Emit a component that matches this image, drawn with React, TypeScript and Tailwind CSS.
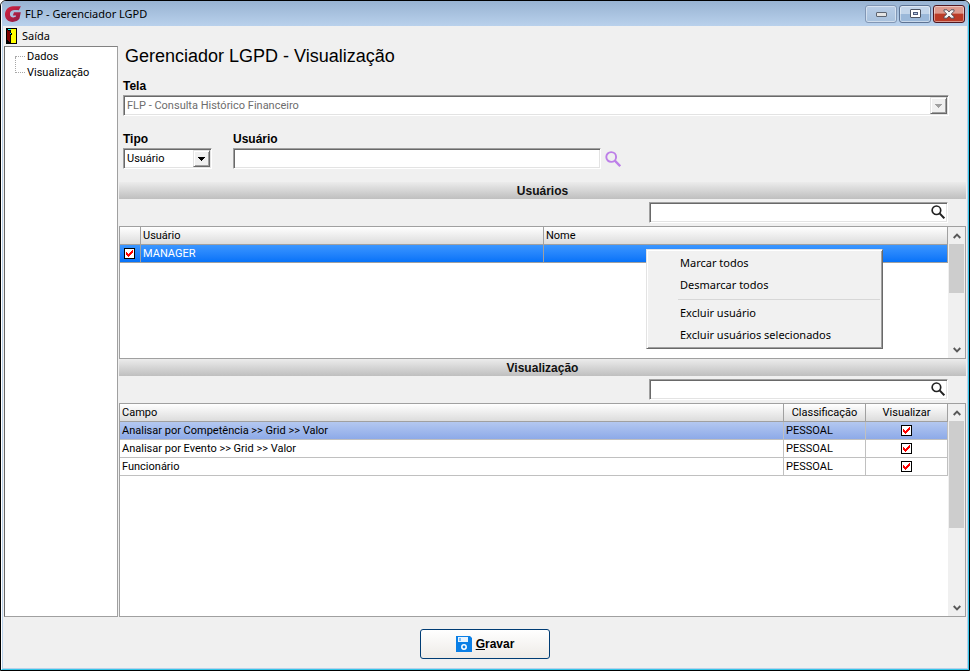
import { useState } from "react";
import type { ReactNode } from "react";
import clsx from "clsx";

const CAMPOS = [
  { campo: "Analisar por Competência >> Grid >> Valor", classificacao: "PESSOAL" },
  { campo: "Analisar por Evento >> Grid >> Valor", classificacao: "PESSOAL" },
  { campo: "Funcionário", classificacao: "PESSOAL" },
];

const SUNKEN =
  "border border-t-[#a0a0a0] border-l-[#a0a0a0] border-r-white border-b-white bg-white shadow-[inset_1px_1px_0_#696969,inset_-1px_-1px_0_#e3e3e3]";

const LABEL = "block pb-px font-['Liberation_Sans',sans-serif] text-[12px] leading-4 font-bold";

function Logo() {
  return (
    <svg viewBox="0 0 16 16" className="size-4 shrink-0" aria-hidden="true">
      <defs>
        <linearGradient id="logo" x1="0" y1="0" x2="1" y2="1">
          <stop offset="0" stopColor="#d8243f" />
          <stop offset="1" stopColor="#8c1c45" />
        </linearGradient>
      </defs>
      <path
        fill="url(#logo)"
        d="M15.900.3 13.800 4.200C12.400 4 10.500 3.900 9 4 6.300 4.200 5 5.700 4.900 7.900c0 2.200 1.300 3.500 3.500 3.500 1.100 0 1.800-.2 2.400-.8l.3-1.100H7.800L9 6.300h6.800l-1.300 6.300c-1.500 2.200-3.800 3.300-7 3.300C3 15.900 0 13 0 8.600 0 3.900 3.200.6 8 .2c2.300-.2 5.300.1 7.900.1z"
      />
    </svg>
  );
}

function DoorIcon() {
  return (
    <svg viewBox="0 0 11 16" className="h-4 w-[11px]" shapeRendering="crispEdges" aria-hidden="true">
      <path d="M0 0h11v16H0z" fill="#000" />
      <path d="M5 1h5v14H5z" fill="#ff0" />
      <path d="M1 2h1v1h2v11H3v-1H2v-1H1z" fill="#800000" />
      <path d="M4 3h1v2h1v2H5v8H4z" fill="#000" />
      <path d="M2 1h3v1H2zM4 5h1v1H4z" fill="#0ff" />
    </svg>
  );
}

function SearchIcon({ className }: { className?: string }) {
  return (
    <svg viewBox="0 0 16 16" className={className} fill="none" stroke="currentColor" aria-hidden="true">
      <circle cx="6.200" cy="6" r="4.900" strokeWidth="1.900" />
      <path d="m9.800 9.600 5.400 5.600" strokeWidth="2.300" />
    </svg>
  );
}

function Chevron({ down }: { down?: boolean }) {
  return (
    <svg viewBox="0 0 8 6" className={clsx("h-1.5 w-2", down && "rotate-180")} aria-hidden="true">
      <path d="M.7 5 4 1.700 7.300 5" fill="none" stroke="#585858" strokeWidth="1.900" />
    </svg>
  );
}

function ScrollBar({ thumb }: { thumb: string }) {
  return (
    <div className="flex w-[17px] shrink-0 flex-col items-center bg-[#f0f0f0]">
      <button aria-label="Rolar para cima" className="flex h-[17px] w-full shrink-0 items-center justify-center">
        <Chevron />
      </button>
      <div className="w-full flex-1 px-px">
        <div className={clsx("bg-[#cdcdcd]", thumb)} />
      </div>
      <button aria-label="Rolar para baixo" className="flex h-[17px] w-full shrink-0 items-center justify-center">
        <Chevron down />
      </button>
    </div>
  );
}

function Check({ label }: { label: string }) {
  const [on, setOn] = useState(true);
  return (
    <span className="mx-auto grid size-[11px]">
      <input
        type="checkbox"
        aria-label={label}
        checked={on}
        onChange={(e) => setOn(e.target.checked)}
        className="col-start-1 row-start-1 size-[11px] appearance-none border border-black bg-white"
      />
      {on && (
        <svg viewBox="0 0 11 11" className="pointer-events-none col-start-1 row-start-1 size-[11px]" shapeRendering="crispEdges">
          <path d="M2 4v3h1v1h1v1h1V8h1V7h1V6h1V5h1V2H8v1H7v1H6v1H5v1H4V5H3V4z" fill="#f00" />
        </svg>
      )}
    </span>
  );
}

function Combo({ id, value, disabled, className }: { id: string; value: string; disabled?: boolean; className?: string }) {
  return (
    <div className={clsx("grid h-[21px] items-center", SUNKEN, className)}>
      <select
        id={id}
        disabled={disabled}
        className={clsx(
          "col-start-1 row-start-1 w-full appearance-none bg-transparent pt-px pl-[3px] text-[11px] leading-4 opacity-100",
          disabled ? "text-[#6d6d6d]" : "text-black",
        )}
      >
        <option>{value}</option>
      </select>
      <span className="pointer-events-none col-start-1 row-start-1 mr-px flex h-[17px] w-[17px] items-center justify-center justify-self-end border border-t-[#e3e3e3] border-l-[#e3e3e3] border-r-[#696969] border-b-[#696969] bg-[#f0f0f0] shadow-[inset_1px_1px_0_#fff,inset_-1px_-1px_0_#a0a0a0]">
        <svg viewBox="0 0 7 4" className={clsx("h-1 w-[7px]", disabled ? "fill-[#a0a0a0]" : "fill-black")} shapeRendering="crispEdges">
          <path d="M0 0h7v1H6v1H5v1H4v1H3V3H2V2H1V1H0z" />
        </svg>
      </span>
    </div>
  );
}

function Band({ children }: { children: ReactNode }) {
  return (
    <h2 className="h-[17px] bg-linear-to-b from-[#ececec] to-[#bfbfbf] pt-px text-center font-['Liberation_Sans',sans-serif] text-[12px] leading-4 font-bold text-[#111]">
      {children}
    </h2>
  );
}

function SearchBox({ label }: { label: string }) {
  return (
    <div className="flex h-[27px] items-start justify-end pt-[3px] pr-[18px]">
      <div className={clsx("flex h-[21px] w-[299px] items-center pr-0.5 pb-px", SUNKEN)}>
        <input type="search" aria-label={label} className="min-w-0 flex-1 bg-transparent px-1 outline-none" />
        <SearchIcon className="size-3.5 text-[#222]" />
      </div>
    </div>
  );
}

function Th({ children, center }: { children?: ReactNode; center?: boolean }) {
  return (
    <th
      className={clsx(
        "h-[18px] border-r border-b border-[#a0a0a0] bg-linear-to-b from-white to-[#dcdcdc] px-0.5 pt-px pb-0 font-normal",
        center ? "text-center" : "text-left",
      )}
    >
      {children}
    </th>
  );
}

function MenuItem({ children }: { children: ReactNode }) {
  return (
    <button role="menuitem" className="block h-[22px] w-full pl-8 text-left leading-[22px]">
      {children}
    </button>
  );
}

function ContextMenu() {
  return (
    <div
      role="menu"
      className="absolute top-[67px] right-[83px] w-[237px] border border-t-[#e3e3e3] border-l-[#e3e3e3] border-r-[#696969] border-b-[#696969] bg-[#f1f1f1] px-px py-0.5 font-['Noto_Sans',sans-serif] shadow-[inset_1px_1px_0_#fff,inset_-1px_-1px_0_#a0a0a0]"
    >
      <MenuItem>Marcar todos</MenuItem>
      <MenuItem>Desmarcar todos</MenuItem>
      <div className="mr-px ml-[30px] flex h-1.5 items-center">
        <div className="h-px w-full bg-[#d7d7d7]" />
      </div>
      <MenuItem>Excluir usuário</MenuItem>
      <MenuItem>Excluir usuários selecionados</MenuItem>
    </div>
  );
}

function TitleBar() {
  const button = "flex h-[18px] w-8 items-center justify-center rounded-[3px] border shadow-[inset_0_0_0_1px_rgba(255,255,255,0.45)]";
  return (
    <header className="flex h-[25px] shrink-0 items-center bg-linear-to-b from-[#98b3d2] to-[#b9d1ec] px-[3px] font-['Noto_Sans',sans-serif]">
      <Logo />
      <h1 className="flex-1 pt-0.5 pl-1 text-[11px]">FLP - Gerenciador LGPD</h1>
      <div className="flex gap-0.5">
        <button aria-label="Minimizar" className={clsx(button, "border-[#8297b5] bg-linear-to-b from-[#b9cde6] to-[#a8c1dd]")}>
          <span className="mt-0.5 h-[5px] w-[11px] rounded-[1px] border border-[#5d6470] bg-[#e4e4e4]" />
        </button>
        <button aria-label="Maximizar" className={clsx(button, "border-[#5d7394] bg-linear-to-b from-[#c3d5ea] from-50% to-[#9bb8d9] to-50%")}>
          <span className="flex h-[9px] w-[11px] items-center justify-center rounded-[1px] border border-[#4d5462] bg-white">
            <span className="h-[3px] w-[5px] border border-[#4d5a7a] bg-[#b7cbe4]" />
          </span>
        </button>
        <button aria-label="Fechar" className={clsx(button, "border-[#4f1720] bg-linear-to-b from-[#dd9a8e] from-45% to-[#bb3b27] to-50%")}>
          <svg viewBox="0 0 12 10" className="h-2.5 w-3" aria-hidden="true">
            <path d="M1 .8h3L6 3 8 .8h3v1.400L8.300 5 11 7.800v1.400H8L6 7 4 9.200H1V7.800L3.700 5 1 2.200z" fill="#f4f4f4" stroke="#4c4a55" strokeWidth=".9" />
          </svg>
        </button>
      </div>
    </header>
  );
}

function Tree() {
  return (
    <nav className="w-[114px] shrink-0 border border-t-[#828282] border-l-[#696969] border-r-[#a0a0a0] border-b-[#a0a0a0] bg-white pt-0.5">
      <ul className="pl-2.5">
        {["Dados", "Visualização"].map((item, i) => (
          <li key={item} className="flex h-4 items-start">
            {/* each branch line reaches up to the one before it */}
            <span className={clsx("w-2.5 border-b border-dotted border-[#a8a8a8]", i === 0 ? "h-2" : "-mt-2 h-4 border-l")} />
            <a href="#" className="pl-0.5 leading-4 text-black">
              {item}
            </a>
          </li>
        ))}
      </ul>
    </nav>
  );
}

function UsersTable() {
  return (
    <div className="flex h-[133px] border border-[#a0a0a0] bg-white">
      <div className="flex-1">
        <table className="w-full table-fixed border-separate border-spacing-0 leading-4">
          <colgroup>
            <col className="w-[21px]" />
            <col className="w-[403px]" />
            <col />
          </colgroup>
          <thead>
            <tr>
              <Th />
              <Th>Usuário</Th>
              <Th>Nome</Th>
            </tr>
          </thead>
          <tbody>
            <tr className="bg-linear-to-b from-[#3a96ff] to-[#0070f8] text-white">
              <td className="h-[18px] border-r border-b border-[#a0a0a0] py-0 pr-0.5 pl-0">
                <Check label="Selecionar MANAGER" />
              </td>
              <td className="border-r border-b border-[#a0a0a0] px-0.5 pt-px pb-0">MANAGER</td>
              <td className="border-r border-b border-[#a0a0a0] p-0" />
            </tr>
          </tbody>
        </table>
      </div>
      <ScrollBar thumb="h-[49px]" />
    </div>
  );
}

function FieldsTable() {
  return (
    <div className="flex flex-1 border border-[#a0a0a0] bg-white">
      <div className="flex-1">
        <table className="w-full table-fixed border-separate border-spacing-0 leading-4">
          <colgroup>
            <col />
            <col className="w-[82px]" />
            <col className="w-[82px]" />
          </colgroup>
          <thead>
            <tr>
              <Th>Campo</Th>
              <Th center>Classificação</Th>
              <Th center>Visualizar</Th>
            </tr>
          </thead>
          <tbody className="[&_td]:h-[18px] [&_td]:border-r [&_td]:border-b [&_td]:border-[#c0c0c0] [&_td]:px-0.5">
            {CAMPOS.map((row, i) => (
              <tr key={row.campo} className={clsx(i === 0 && "bg-linear-to-b from-[#b4c8f0] to-[#8ba8e8]")}>
                <td className="pt-px pb-0">{row.campo}</td>
                <td className="pt-px pb-0">{row.classificacao}</td>
                <td className="py-0">
                  <Check label={`Visualizar ${row.campo}`} />
                </td>
              </tr>
            ))}
          </tbody>
        </table>
      </div>
      <ScrollBar thumb="h-[107px]" />
    </div>
  );
}

function SaveIcon() {
  return (
    <svg viewBox="0 0 16 16" className="size-4" aria-hidden="true">
      <path d="M0 0h14l2 2v14H0z" fill="#0a7fe6" />
      <path d="M2 1h10v5H2z" fill="#e8f4ff" />
      <path d="M3 2h2v3H3z" fill="#7fbdf5" />
      <circle cx="8" cy="11" r="2.200" fill="none" stroke="#fff" strokeWidth="1.500" />
    </svg>
  );
}

export default function App() {
  return (
    <div className="flex min-h-screen flex-col overflow-hidden rounded-t-md border border-black bg-[#f0f0f0] font-['Roboto',sans-serif] text-[11px] text-black">
      <div className="flex flex-1 flex-col border-r border-b border-l border-l-white border-r-[#35c5e8] border-b-[#35c5e8]">
        <TitleBar />
        <div className="flex flex-1 flex-col border-r border-b border-l border-[#b9d1ea]">
          <div className="flex h-5 items-center pl-[3px]">
            <button className="flex items-center gap-[5px] font-['Noto_Sans',sans-serif]">
              <DoorIcon />
              Saída
            </button>
          </div>
          <div className="flex flex-1 gap-px px-px">
            <Tree />
            <main className="flex min-w-0 flex-1 flex-col">
              <section className="flex h-[136px] flex-col pr-[17px] pl-1">
                <h2 className="pl-0.5 font-['Liberation_Sans',sans-serif] text-[18px] leading-5">Gerenciador LGPD - Visualização</h2>
                <label htmlFor="tela" className={clsx("mt-3", LABEL)}>
                  Tela
                </label>
                <Combo id="tela" value="FLP - Consulta Histórico Financeiro" disabled className="w-full" />
                <div className="mt-[15px] flex items-end gap-[21px]">
                  <div>
                    <label htmlFor="tipo" className={LABEL}>
                      Tipo
                    </label>
                    <Combo id="tipo" value="Usuário" className="w-[89px]" />
                  </div>
                  <div>
                    <label htmlFor="usuario" className={LABEL}>
                      Usuário
                    </label>
                    <div className="flex items-center gap-1">
                      <input id="usuario" type="text" className={clsx("h-[21px] w-[368px] px-1", SUNKEN)} />
                      <button aria-label="Pesquisar usuário">
                        <SearchIcon className="size-4 text-[#bd7fe8]" />
                      </button>
                    </div>
                  </div>
                </div>
              </section>
              <section className="relative">
                <Band>Usuários</Band>
                <SearchBox label="Pesquisar usuários" />
                <UsersTable />
                <ContextMenu />
              </section>
              <section className="flex flex-1 flex-col">
                <Band>Visualização</Band>
                <SearchBox label="Pesquisar campos" />
                <FieldsTable />
              </section>
            </main>
          </div>
          <footer className="flex h-[51px] shrink-0 items-center justify-center pt-0.5">
            <button className="flex h-[30px] w-[130px] items-center justify-center gap-1 rounded-[3px] border border-[#003c74] bg-linear-to-b from-white to-[#eeebe7] font-['Liberation_Sans',sans-serif] text-[12px] font-bold">
              <SaveIcon />
              <span>
                <u>G</u>ravar
              </span>
            </button>
          </footer>
        </div>
      </div>
    </div>
  );
}
